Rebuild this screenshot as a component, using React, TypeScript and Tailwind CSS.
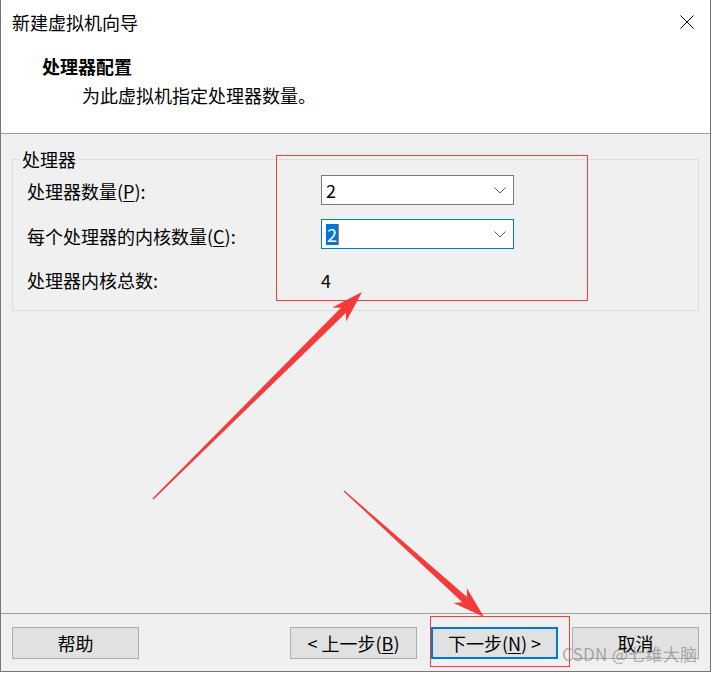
import React from "react";

const Chevron = () => (
  <svg width="12" height="7" viewBox="0 0 12 7" className="shrink-0">
    <path d="M0.5 0.5 L6 6 L11.5 0.5" fill="none" stroke="#5a5a5a" strokeWidth="1" />
  </svg>
);

export default function App() {
  return (
    <div className="relative w-[712px] h-[673px] bg-white font-['Microsoft_YaHei','Noto_Sans_CJK_SC',sans-serif] text-[18px] text-black overflow-hidden">
      <div className="w-[711px] h-[672px] flex flex-col border-l border-r border-b border-[#767676] bg-white">
        {/* title bar */}
        <div className="h-[44px] flex items-center justify-between pl-[11px] pr-[16px]">
          <span className="leading-[24px]">新建虚拟机向导</span>
          <svg width="14" height="14" viewBox="0 0 14 14">
            <path d="M0.5 0.5 L13.5 13.5 M13.5 0.5 L0.5 13.5" stroke="#000" strokeWidth="1" />
          </svg>
        </div>
        {/* header */}
        <div className="h-[90px] border-b border-[#a0a0a0] pt-[10px]">
          <div className="pl-[41px] font-bold leading-[24px]">处理器配置</div>
          <div className="pl-[81px] mt-[5px] leading-[24px]">为此虚拟机指定处理器数量。</div>
        </div>
        {/* body */}
        <div className="flex-1 bg-[#f0f0f0] pt-[25px] pl-[11px]">
          <div className="relative w-[687px] h-[152px] border border-[#dcdcdc] pl-[14px] pt-[15px]">
            <span className="absolute -top-[12px] left-[6px] px-[3px] bg-[#f0f0f0] leading-[22px]">处理器</span>
            <div className="flex flex-col gap-[14px]">
              <div className="flex items-center h-[30px]">
                <span className="w-[294px] leading-[24px] pt-[2px]">
                  处理器数量(<span className="underline underline-offset-2">P</span>):
                </span>
                <div className="w-[193px] h-[30px] border border-[#7a7a7a] bg-white flex items-center justify-between pl-[4px] pr-[7px]">
                  <span className="leading-[22px]">2</span>
                  <Chevron />
                </div>
              </div>
              <div className="flex items-center h-[30px]">
                <span className="w-[294px] leading-[24px] pt-[3px]">
                  每个处理器的内核数量(<span className="underline underline-offset-2">C</span>):
                </span>
                <div className="w-[193px] h-[30px] border border-[#0078d7] bg-white flex items-center justify-between pl-[4px] pr-[7px]">
                  <div className="flex items-center">
                    <span className="bg-[#0078d7] text-white leading-[21px] px-[1px]">2</span>
                    <span className="w-[1px] h-[21px] bg-[#e07a10]" />
                  </div>
                  <Chevron />
                </div>
              </div>
              <div className="flex items-center h-[30px] mt-[2px]">
                <span className="w-[294px] leading-[24px]">处理器内核总数:</span>
                <span className="leading-[24px]">4</span>
              </div>
            </div>
          </div>
        </div>
        {/* footer */}
        <div className="h-[58px] border-t border-[#a0a0a0] bg-[#f0f0f0] flex items-start justify-between pt-[13px] pl-[11px] pr-[11px]">
          <div className="w-[127px] h-[32px] bg-[#e1e1e1] border border-[#adadad] flex items-center justify-center leading-[24px]">
            帮助
          </div>
          <div className="flex gap-[14px]">
            <div className="w-[127px] h-[32px] bg-[#e1e1e1] border border-[#adadad] flex items-center justify-center leading-[24px]">
              &lt; 上一步(<span className="underline underline-offset-2">B</span>)
            </div>
            <div className="w-[127px] h-[32px] bg-[#e1e1e1] border-2 border-[#0078d7] flex items-center justify-center leading-[24px]">
              下一步(<span className="underline underline-offset-2">N</span>) &gt;
            </div>
            <div className="w-[127px] h-[32px] bg-[#e1e1e1] border border-[#adadad] flex items-center justify-center leading-[24px]">
              取消
            </div>
          </div>
        </div>
      </div>

      {/* annotations */}
      <div className="absolute left-[276px] top-[155px] w-[312px] h-[146px] border border-[#f33c3c] pointer-events-none" />
      <div className="absolute left-[430px] top-[616px] w-[140px] h-[51px] border border-[#f33c3c] pointer-events-none" />
      <svg className="absolute left-0 top-0 pointer-events-none" width="712" height="673" viewBox="0 0 712 673">
        <polygon
          fill="#f43a3a"
          points="152.5,498.5 341,307.8 332.2,307.4 362,292 346.2,321.6 346,312.8 153.5,499.5"
        />
        <polygon
          fill="#f43a3a"
          points="343.6,491.4 462.4,602.2 453.5,603 484,617 466.9,588.2 467,597 344.4,490.6"
        />
      </svg>
      <div className="absolute left-[562px] top-[643px] text-[17px] tracking-[0.3px] leading-[22px] text-[#707070]/55 pointer-events-none whitespace-nowrap">
        CSDN @七维大脑
      </div>
    </div>
  );
}
